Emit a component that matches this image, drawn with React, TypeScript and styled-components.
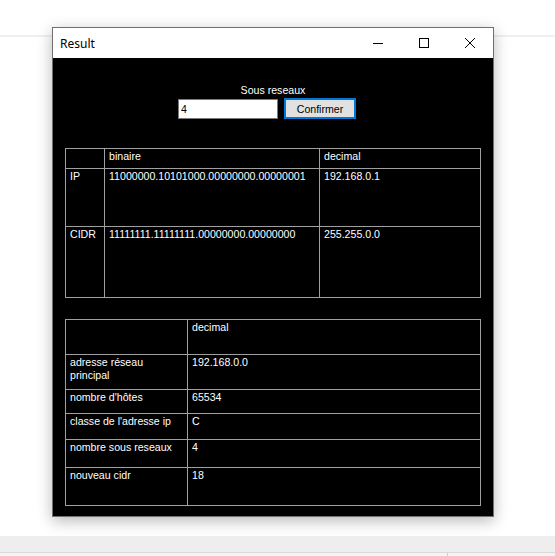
import React from 'react';
import styled, { createGlobalStyle } from 'styled-components';

const GlobalStyle = createGlobalStyle`
  html, body {
    margin: 0;
    padding: 0;
    background: #ffffff;
  }
  body {
    font-family: 'Liberation Sans', Arial, sans-serif;
  }
`;

const Desktop = styled.div`
  position: relative;
  width: 555px;
  height: 556px;
  overflow: hidden;
  display: flex;
  flex-direction: column;
  background: #ffffff;
`;

const TopStrip = styled.div`
  height: 35px;
  border-bottom: 2px solid #f0f0f0;
`;

const Filler = styled.div`
  flex: 1;
`;

const BottomBand = styled.div`
  height: 16px;
  background: #eeeeee;
`;

const BottomBar = styled.div`
  height: 3px;
  border-top: 1px solid #d9d9d9;
  background: #f4f4f4;
  display: flex;
  padding-left: 447px;
`;

const Tick = styled.div`
  width: 1px;
  background: #cfcfcf;
`;

/* the form window sits on the desktop at its own place */
const Window = styled.div`
  position: absolute;
  left: 52px;
  top: 27px;
  width: 442px;
  height: 490px;
  box-sizing: border-box;
  border: 1px solid #707070;
  display: flex;
  flex-direction: column;
  box-shadow: 0 4px 14px rgba(0, 0, 0, 0.28);
`;

const TitleBar = styled.div`
  height: 30px;
  background: #ffffff;
  display: flex;
  align-items: center;
`;

const Title = styled.span`
  flex: 1;
  padding-left: 7px;
  font-family: 'Segoe UI', 'Noto Sans', 'Open Sans', sans-serif;
  font-size: 12px;
  color: #000000;
`;

const CaptionButton = styled.div`
  width: 46px;
  height: 30px;
  display: flex;
  align-items: center;
  justify-content: center;
`;

const Content = styled.div`
  flex: 1;
  background: #000000;
  display: flex;
  flex-direction: column;
  padding: 0 12px;
  font-size: 10.6px;
  line-height: 13px;
  color: #ffffff;
`;

const Caption = styled.div`
  margin-top: 26px;
  text-align: center;
  height: 13px;
`;

const InputRow = styled.div`
  display: flex;
  align-items: flex-start;
  gap: 6px;
  margin-left: 113px;
`;

const TextBox = styled.input`
  box-sizing: border-box;
  width: 100px;
  height: 20px;
  margin-top: 2px;
  border: 1px solid #7a7a7a;
  background: #ffffff;
  padding: 0 2px;
  font-family: inherit;
  font-size: 10.6px;
  color: #000000;
  outline: none;
`;

const ConfirmButton = styled.button`
  box-sizing: border-box;
  width: 72px;
  height: 21px;
  margin-top: 1px;
  border: 2px solid #0078d7;
  background: #e1e1e1;
  padding: 0;
  font-family: inherit;
  font-size: 10.6px;
  color: #000000;
`;

const Grid = styled.div<{ $cols: string; $rows: string; $top: number }>`
  display: grid;
  grid-template-columns: ${p => p.$cols};
  grid-template-rows: ${p => p.$rows};
  gap: 1px;
  padding: 1px;
  width: fit-content;
  margin-top: ${p => p.$top}px;
  background: #a0a0a0;
`;

const Cell = styled.div`
  background: #000000;
  padding: 1px 4px;
  overflow: hidden;
`;

const MinIcon = () => (
  <svg width="10" height="10" viewBox="0 0 10 10">
    <line x1="0" y1="5.5" x2="10" y2="5.5" stroke="#000" strokeWidth="1" />
  </svg>
);

const MaxIcon = () => (
  <svg width="10" height="10" viewBox="0 0 10 10">
    <rect x="0.5" y="0.5" width="9" height="9" fill="none" stroke="#000" strokeWidth="1" />
  </svg>
);

const CloseIcon = () => (
  <svg width="10" height="10" viewBox="0 0 10 10">
    <path d="M0 0 L10 10 M10 0 L0 10" stroke="#000" strokeWidth="1" />
  </svg>
);

const binaryRows = [
  { label: 'IP', bin: '11000000.10101000.00000000.00000001', dec: '192.168.0.1' },
  { label: 'CIDR', bin: '11111111.11111111.00000000.00000000', dec: '255.255.0.0' },
];

const infoRows = [
  { label: 'adresse réseau principal', value: '192.168.0.0' },
  { label: "nombre d'hôtes", value: '65534' },
  { label: "classe de l'adresse ip", value: 'C' },
  { label: 'nombre sous reseaux', value: '4' },
  { label: 'nouveau cidr', value: '18' },
];

const App = () => {
  return (
    <Desktop>
      <GlobalStyle />
      <TopStrip />
      <Filler />
      <BottomBand />
      <BottomBar>
        <Tick />
      </BottomBar>

      <Window>
        <TitleBar>
          <Title>Result</Title>
          <CaptionButton>
            <MinIcon />
          </CaptionButton>
          <CaptionButton>
            <MaxIcon />
          </CaptionButton>
          <CaptionButton>
            <CloseIcon />
          </CaptionButton>
        </TitleBar>

        <Content>
          <Caption>Sous reseaux</Caption>
          <InputRow>
            <TextBox defaultValue="4" />
            <ConfirmButton>Confirmer</ConfirmButton>
          </InputRow>

          <Grid $cols="38px 214px 160px" $rows="19px 57px 70px" $top={29}>
            <Cell />
            <Cell>binaire</Cell>
            <Cell>decimal</Cell>
            {binaryRows.map(row => (
              <React.Fragment key={row.label}>
                <Cell>{row.label}</Cell>
                <Cell>{row.bin}</Cell>
                <Cell>{row.dec}</Cell>
              </React.Fragment>
            ))}
          </Grid>

          <Grid $cols="121px 292px" $rows="34px 34px 23px 25px 27px 37px" $top={21}>
            <Cell />
            <Cell>decimal</Cell>
            {infoRows.map(row => (
              <React.Fragment key={row.label}>
                <Cell>{row.label}</Cell>
                <Cell>{row.value}</Cell>
              </React.Fragment>
            ))}
          </Grid>
        </Content>
      </Window>
    </Desktop>
  );
};

export default App;
